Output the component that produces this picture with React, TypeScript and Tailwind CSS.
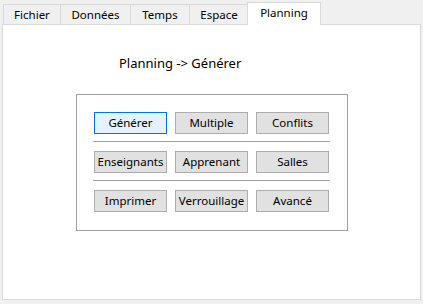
const tabs = [
  { label: 'Fichier', w: 'w-[58px]' },
  { label: 'Données', w: 'w-[71px]' },
  { label: 'Temps', w: 'w-[60px]' },
  { label: 'Espace', w: 'w-[60px]' },
];

const rows = [
  ['Générer', 'Multiple', 'Conflits'],
  ['Enseignants', 'Apprenant', 'Salles'],
  ['Imprimer', 'Verrouillage', 'Avancé'],
];

function Btn({ label, active }: { label: string; active?: boolean }) {
  return (
    <button
      className={
        active
          ? 'w-[73px] h-[22px] border border-[#0078d7] bg-[#e5f1fb] text-[11.5px] text-black leading-none'
          : 'w-[73px] h-[22px] border border-[#adadad] bg-[#e1e1e1] text-[11.5px] text-black leading-none'
      }
    >
      {label}
    </button>
  );
}

export default function App() {
  return (
    <div className="w-[423px] h-[304px] bg-[#f0f0f0] font-['Noto_Sans',sans-serif] text-black">
      {/* tab strip */}
      <div className="flex items-end h-[24px] pl-[3px]">
        {tabs.map((t, i) => (
          <div
            key={t.label}
            className={`${t.w} h-[20px] ${i > 0 ? '-ml-px' : ''} border border-b-0 border-[#d9d9d9] bg-[#f0f0f0] flex items-center justify-center text-[11.5px]`}
          >
            {t.label}
          </div>
        ))}
        <div className="relative z-10 -ml-[2px] -mb-px w-[74px] h-[23px] border border-b-0 border-[#d9d9d9] bg-white flex items-center justify-center text-[11.5px] pb-[2px]">
          Planning
        </div>
      </div>

      {/* page */}
      <div className="ml-[2px] w-[419px] h-[276px] border border-[#d9d9d9] bg-white">
        <div className="pl-[116px] pt-[29px] text-[13px] leading-[18px]">Planning -&gt; Générer</div>
        <div className="ml-[73px] mt-[22px] w-[272px] h-[137px] border border-[#a0a0a0] pl-[16px] pr-[17px] pt-[17px]">
          {rows.map((row, r) => (
            <div key={r}>
              {r > 0 && <div className="h-px bg-[#a0a0a0] mt-[7px] mb-[9px]" />}
              <div className="flex gap-[8px] px-px">
                {row.map((b) => (
                  <Btn key={b} label={b} active={b === 'Générer'} />
                ))}
              </div>
            </div>
          ))}
        </div>
      </div>
    </div>
  );
}
